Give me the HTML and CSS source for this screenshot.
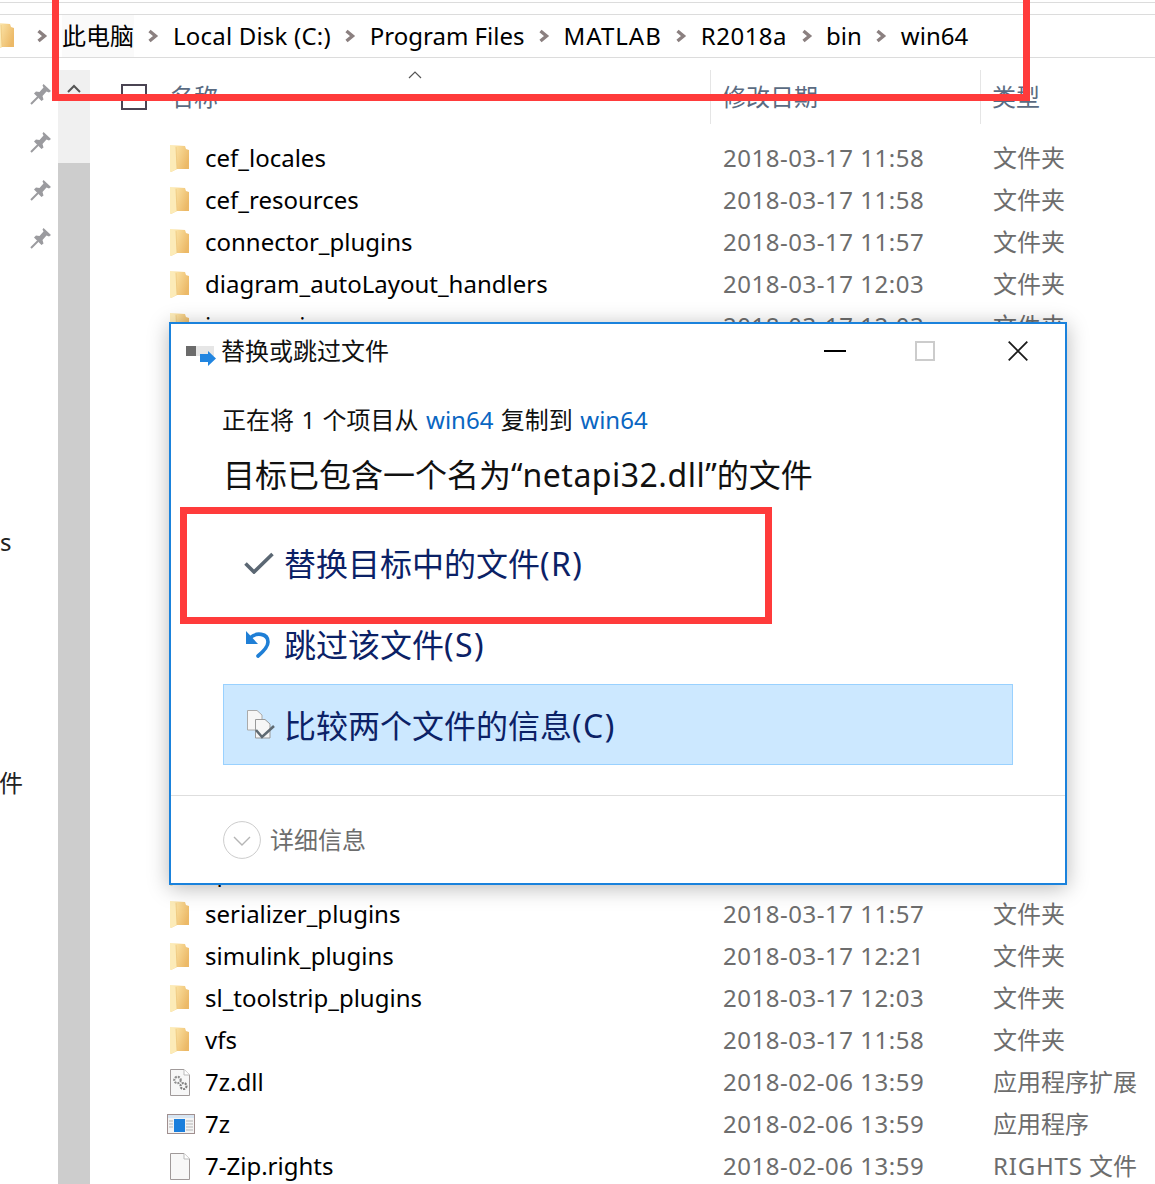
FILE: index.html
```html
<!DOCTYPE html>
<html lang="zh-CN">
<head>
<meta charset="utf-8">
<title>替换或跳过文件</title>
<link rel="stylesheet" href="styles.css">
</head>
<body>
<svg class="defs" width="0" height="0" aria-hidden="true">
  <defs>
    <linearGradient id="folder-face" x1="0" y1="0" x2="1" y2="0.5">
      <stop offset="0" stop-color="#fdf0c4"/>
      <stop offset="0.35" stop-color="#f9dd9c"/>
      <stop offset="1" stop-color="#ecb967"/>
    </linearGradient>
  </defs>
  <symbol id="folder" viewBox="0 0 20 27">
    <path d="M0 0 L15 1 L16 4 L19 5 L19 24 L7 24 L1 27 L0 26Z" fill="url(#folder-face)"/>
    <path d="M0 0 L6 2 L7 24 L1 27 L0 26Z" fill="#fcebb8"/>
    <path d="M6 2 L7 24" stroke="#eec67c" stroke-width=".8" fill="none"/>
  </symbol>
  <symbol id="chev" viewBox="0 0 12 14">
    <path d="M2.5 2 L8.5 7 L2.5 12" fill="none" stroke="#8b8080" stroke-width="3.4"/>
  </symbol>
  <symbol id="pin" viewBox="0 0 22 22">
    <path d="M13.5 1 L21 8 L19 9.5 L16.5 8.5 L12.5 13 L13.5 16.5 L11.5 18 L4 10.5 L6 8.5 L9.5 9 L13.5 4.5 L12.5 2.5Z" fill="#9b9b9f"/>
    <path d="M1 21 L8 14" stroke="#9b9b9f" stroke-width="2"/>
  </symbol>
</svg>

<div class="page">
  <div class="toolbar"></div>
  <nav class="address">
    <svg class="crumb-folder"><use href="#folder"/></svg>
    <svg class="chev chev-first"><use href="#chev"/></svg>
    <span class="crumb crumb-hover">此电脑</span>
    <svg class="chev chev-tight"><use href="#chev"/></svg>
    <span class="crumb crumb-disk">Local Disk (C:)</span>
    <svg class="chev"><use href="#chev"/></svg>
    <span class="crumb">Program Files</span>
    <svg class="chev"><use href="#chev"/></svg>
    <span class="crumb crumb-wide">MATLAB</span>
    <svg class="chev"><use href="#chev"/></svg>
    <span class="crumb crumb-mid">R2018a</span>
    <svg class="chev"><use href="#chev"/></svg>
    <span class="crumb">bin</span>
    <svg class="chev"><use href="#chev"/></svg>
    <span class="crumb">win64</span>
  </nav>

  <div class="main">
    <aside class="nav">
      <div class="nav-row"><svg class="pin"><use href="#pin"/></svg></div>
      <div class="nav-row"><svg class="pin"><use href="#pin"/></svg></div>
      <div class="nav-row"><svg class="pin"><use href="#pin"/></svg></div>
      <div class="nav-row"><svg class="pin"><use href="#pin"/></svg></div>
      <div class="nav-row nav-label nav-label-s">s</div>
      <div class="nav-row nav-label nav-label-j">件</div>
    </aside>
    <div class="scrollbar">
      <div class="scroll-track">
        <svg class="scroll-up" viewBox="0 0 14 9"><path d="M1 8 L7 2 L13 8" fill="none" stroke="#555" stroke-width="2"/></svg>
      </div>
      <div class="scroll-thumb"></div>
    </div>
    <section class="list">
      <div class="head">
        <span class="check"></span>
        <div class="head-cell head-name"><span class="head-text">名称</span>
          <svg class="sort" viewBox="0 0 14 8"><path d="M1 7 L7 1 L13 7" fill="none" stroke="#555" stroke-width="1.2"/></svg>
        </div>
        <div class="head-cell head-date"><span class="head-text">修改日期</span></div>
        <div class="head-cell head-type"><span class="head-text">类型</span></div>
      </div>

      <div class="row"><svg class="ico"><use href="#folder"/></svg><span class="name">cef_locales</span><span class="date">2018-03-17 11:58</span><span class="type">文件夹</span></div>
      <div class="row"><svg class="ico"><use href="#folder"/></svg><span class="name">cef_resources</span><span class="date">2018-03-17 11:58</span><span class="type">文件夹</span></div>
      <div class="row"><svg class="ico"><use href="#folder"/></svg><span class="name">connector_plugins</span><span class="date">2018-03-17 11:57</span><span class="type">文件夹</span></div>
      <div class="row"><svg class="ico"><use href="#folder"/></svg><span class="name">diagram_autoLayout_handlers</span><span class="date">2018-03-17 12:03</span><span class="type">文件夹</span></div>
      <div class="row"><svg class="ico"><use href="#folder"/></svg><span class="name">iconservices</span><span class="date">2018-03-17 12:03</span><span class="type">文件夹</span></div>
      <div class="rows-hidden"></div>
      <div class="row"><svg class="ico"><use href="#folder"/></svg><span class="name">sp</span><span class="date"></span><span class="type"></span></div>
      <div class="row"><svg class="ico"><use href="#folder"/></svg><span class="name">serializer_plugins</span><span class="date">2018-03-17 11:57</span><span class="type">文件夹</span></div>
      <div class="row"><svg class="ico"><use href="#folder"/></svg><span class="name">simulink_plugins</span><span class="date">2018-03-17 12:21</span><span class="type">文件夹</span></div>
      <div class="row"><svg class="ico"><use href="#folder"/></svg><span class="name">sl_toolstrip_plugins</span><span class="date">2018-03-17 12:03</span><span class="type">文件夹</span></div>
      <div class="row"><svg class="ico"><use href="#folder"/></svg><span class="name">vfs</span><span class="date">2018-03-17 11:58</span><span class="type">文件夹</span></div>
      <div class="row">
        <svg class="ico" viewBox="0 0 20 27">
          <path d="M.5 .5 H14 L19.5 6 V26.5 H.5Z" fill="#f7f7f7" stroke="#a09a9a"/>
          <path d="M14 .5 V6 H19.5" fill="#fff" stroke="#bbb"/>
          <circle cx="7.5" cy="11" r="3.2" fill="none" stroke="#8f8f8f" stroke-width="2.2" stroke-dasharray="2 1"/>
          <circle cx="13.5" cy="17" r="3" fill="none" stroke="#808080" stroke-width="2.2" stroke-dasharray="2 1"/>
        </svg>
        <span class="name">7z.dll</span><span class="date">2018-02-06 13:59</span><span class="type">应用程序扩展</span>
      </div>
      <div class="row">
        <svg class="ico ico-app" viewBox="0 0 28 20">
          <rect x=".5" y=".5" width="27" height="19" fill="#f4f4f4" stroke="#a08f8f"/>
          <rect x="1" y="1" width="26" height="3" fill="#d9e6f2"/>
          <rect x="7" y="5" width="11" height="13" fill="#1b7fdc"/>
          <path d="M2 7h4M2 10h4M2 13h4M19 7h7M19 10h7M19 13h7M19 16h7" stroke="#b5b5b5"/>
        </svg>
        <span class="name">7z</span><span class="date">2018-02-06 13:59</span><span class="type">应用程序</span>
      </div>
      <div class="row">
        <svg class="ico" viewBox="0 0 20 27">
          <path d="M.5 .5 H14 L19.5 6 V26.5 H.5Z" fill="#f8f8f8" stroke="#a09a9a"/>
          <path d="M14 .5 V6 H19.5" fill="#fff" stroke="#bbb"/>
        </svg>
        <span class="name">7-Zip.rights</span><span class="date">2018-02-06 13:59</span><span class="type"><span class="type-latin">RIGHTS</span> 文件</span>
      </div>
    </section>
  </div>

  <div class="dialog">
    <header class="dlg-title">
      <svg class="dlg-icon" viewBox="0 0 30 22">
        <rect x="0" y="2" width="28" height="10" fill="#e6e6e6"/>
        <rect x="0" y="2" width="10" height="10" fill="#6b6b6b"/>
        <path d="M14 10 H22 V7 L30 14.5 L22 22 V18 H14Z" fill="#2185e0"/>
      </svg>
      <span class="dlg-title-text">替换或跳过文件</span>
      <div class="win-btns">
        <svg class="win win-min" viewBox="0 0 22 22"><path d="M0 11 H22" stroke="#000" stroke-width="2"/></svg>
        <svg class="win win-max" viewBox="0 0 20 20"><rect x="1" y="1" width="18" height="18" fill="none" stroke="#ccc" stroke-width="2"/></svg>
        <svg class="win win-close" viewBox="0 0 20 20"><path d="M.7 .7 L19.3 19.3 M19.3 .7 L.7 19.3" stroke="#1a1a1a" stroke-width="1.8"/></svg>
      </div>
    </header>
    <div class="dlg-body">
      <p class="dlg-sub">正在将 1 个项目从 <span class="link">win64</span> 复制到 <span class="link">win64</span></p>
      <h1 class="dlg-head">目标已包含一个名为“<span class="file-name">netapi32.dll</span>”的文件</h1>
      <div class="option">
        <svg class="opt-icon" viewBox="0 0 30 22"><path d="M1.5 11.5 L10 20 L28.5 2" fill="none" stroke="#5b6773" stroke-width="3.6"/></svg>
        <span class="opt-text">替换目标中的文件<span class="key">(R)</span></span>
      </div>
      <div class="option">
        <svg class="opt-icon opt-skip" viewBox="0 0 26 28">
          <path d="M2 1 L2 14 L14 14Z" fill="#1f7fd6"/>
          <path d="M6 8 C12 2 24 3 24 12 C24 17 20 21 14 26" fill="none" stroke="#1f7fd6" stroke-width="3.6" stroke-linecap="round"/>
        </svg>
        <span class="opt-text">跳过该文件<span class="key">(S)</span></span>
      </div>
      <div class="option option-active">
        <svg class="opt-icon opt-compare" viewBox="0 0 28 30">
          <path d="M.5 .5 H10 L15 5 V20 H.5Z" fill="#f6f6f6" stroke="#aaa"/>
          <path d="M8.5 9.5 H18 L23 14 V28 H8.5Z" fill="#f6f6f6" stroke="#999"/>
          <path d="M9 20 L15 27 L27 16" fill="none" stroke="#5f6a72" stroke-width="2.6"/>
        </svg>
        <span class="opt-text">比较两个文件的信息<span class="key">(C)</span></span>
      </div>
    </div>
    <footer class="dlg-foot">
      <svg class="more" viewBox="0 0 38 38">
        <circle cx="19" cy="19" r="18.4" fill="#fff" stroke="#ccc"/>
        <path d="M11 16 L19 24 L27 16" fill="none" stroke="#b5b5b5" stroke-width="1.4"/>
      </svg>
      <span class="more-text">详细信息</span>
    </footer>
  </div>

  <div class="mark mark-address"></div>
  <div class="mark mark-option"></div>
</div>
</body>
</html>
```
FILE: styles.css
```css
* { box-sizing: border-box; }
html, body { margin: 0; padding: 0; background: #fff; }
body {
  font-family: "Noto Sans", "Noto Sans CJK SC", sans-serif;
  font-size: 24px;
  color: #000;
}
.defs { position: absolute; }
.page {
  position: relative;
  width: 1155px;
  height: 1184px;
  overflow: hidden;
  display: flex;
  flex-direction: column;
  background: #fff;
}
.toolbar {
  flex: none;
  height: 13px;
  margin-top: 2px;
  border-top: 1px solid #dcdcdc;
  border-bottom: 1px solid #dcdcdc;
}
.address {
  flex: none;
  height: 43px;
  display: flex;
  align-items: center;
  border-bottom: 1px solid #dcdcdc;
  white-space: nowrap;
}
.crumb-folder { width: 20px; height: 27px; margin-left: -5px; flex: none; }
.chev { width: 12px; height: 14px; margin: 0 13.5px; flex: none; }
.chev-first { margin: 0 14px 0 21px; }
.chev-tight { margin: 0 14px 0 13px; }
.crumb { line-height: 42px; }
.crumb-hover { background: #fafafa; }
.crumb-disk { letter-spacing: .2px; }
.crumb-wide { letter-spacing: 1px; }
.crumb-mid { letter-spacing: .5px; }

.main { flex: 1; display: flex; padding-top: 12px; min-height: 0; }
.nav { width: 58px; flex: none; }
.nav-row { height: 48px; display: flex; align-items: center; }
.pin { width: 22px; height: 22px; margin-left: 30px; }
.nav-label { color: #222; }
.nav-label-s { margin-top: 255px; }
.nav-label-j { margin-top: 192px; margin-left: -1px; }

.scrollbar { width: 32px; flex: none; display: flex; flex-direction: column; }
.scroll-track { height: 93px; background: #f0f0f0; display: flex; justify-content: center; }
.scroll-up { width: 14px; height: 9px; margin-top: 14px; }
.scroll-thumb { flex: 1; background: #cdcdcd; }

.list { flex: 1; min-width: 0; }
.head {
  height: 54px;
  margin-bottom: 13px;
  padding-left: 31px;
  display: flex;
  color: #5a6b82;
}
.check {
  width: 26px;
  height: 26px;
  margin-top: 14px;
  border: 2px solid #4a4452;
  flex: none;
}
.head-cell { display: flex; align-items: center; white-space: nowrap; }
.head-text { margin-bottom: 4px; }
.head-name { position: relative; width: 563px; padding-left: 23px; }
.head-date { width: 270px; padding-left: 11px; border-left: 1px solid #e5e5e5; }
.head-type { flex: 1; padding-left: 11px; border-left: 1px solid #e5e5e5; }
.sort { position: absolute; left: 261px; top: 1px; width: 14px; height: 8px; }

.row {
  height: 42px;
  padding-left: 80px;
  display: grid;
  grid-template-columns: 35px 518px 270px 1fr;
  align-items: center;
  white-space: nowrap;
}
.ico { width: 20px; height: 27px; }
.ico-app { width: 28px; height: 20px; margin-left: -3px; }
.name { margin-bottom: 2px; }
.date { color: #6d6d6d; margin-bottom: 2px; letter-spacing: .52px; }
.type { color: #6d6d6d; margin-bottom: 4px; }
.type-latin { letter-spacing: .8px; }
.rows-hidden { height: 504px; }

.dialog {
  position: absolute;
  left: 169px;
  top: 322px;
  width: 898px;
  height: 563px;
  background: #fff;
  border: 2px solid #1a82dc;
  box-shadow: 0 3px 20px rgba(0, 0, 0, .28);
  display: flex;
  flex-direction: column;
}
.dlg-title {
  height: 54px;
  flex: none;
  display: flex;
  align-items: center;
  padding-left: 15px;
  padding-right: 37px;
  color: #111;
}
.dlg-icon { width: 30px; height: 22px; margin-top: 8px; flex: none; }
.dlg-title-text { margin: 0 0 4px 5px; }
.win-btns { margin-left: auto; display: flex; align-items: center; }
.win-min { width: 22px; height: 22px; }
.win-max { width: 20px; height: 20px; margin-left: 69px; }
.win-close { width: 20px; height: 20px; margin-left: 73px; }
.dlg-body { flex: 1; padding-left: 52px; }
.dlg-sub {
  margin: 22px 0 7px -1px;
  height: 40px;
  line-height: 40px;
  color: #111;
  word-spacing: 1.2px;
}
.dlg-head {
  margin: 0 0 19px;
  height: 56px;
  line-height: 56px;
  font-size: 32px;
  font-weight: 400;
  color: #111;
  white-space: nowrap;
}
.file-name { letter-spacing: .5px; }
.link { color: #0a66c2; }
.option {
  width: 790px;
  height: 81px;
  display: flex;
  align-items: center;
  padding-left: 20px;
  font-size: 32px;
  color: #0b2166;
  border: 1px solid transparent;
}
.option-active { background: #cce8ff; border-color: #99d1ff; }
.opt-text { margin-bottom: 2px; }
.key { letter-spacing: 1.4px; }
.opt-icon { width: 30px; height: 22px; margin-right: 10px; flex: none; }
.opt-skip { width: 26px; height: 28px; margin-right: 14px; }
.opt-compare { width: 28px; height: 30px; margin-right: 9px; margin-left: 3px; }
.dlg-foot {
  height: 88px;
  flex: none;
  border-top: 1px solid #dedede;
  display: flex;
  align-items: center;
  padding-left: 52px;
}
.more { width: 38px; height: 38px; }
.more-text { margin: 0 0 2px 9px; color: #6d6d6d; }

.mark { position: absolute; border: 7px solid #ff3b3b; }
.mark-address { left: 52px; top: -20px; width: 978px; height: 121px; }
.mark-option { left: 180px; top: 507px; width: 592px; height: 117px; }
```
